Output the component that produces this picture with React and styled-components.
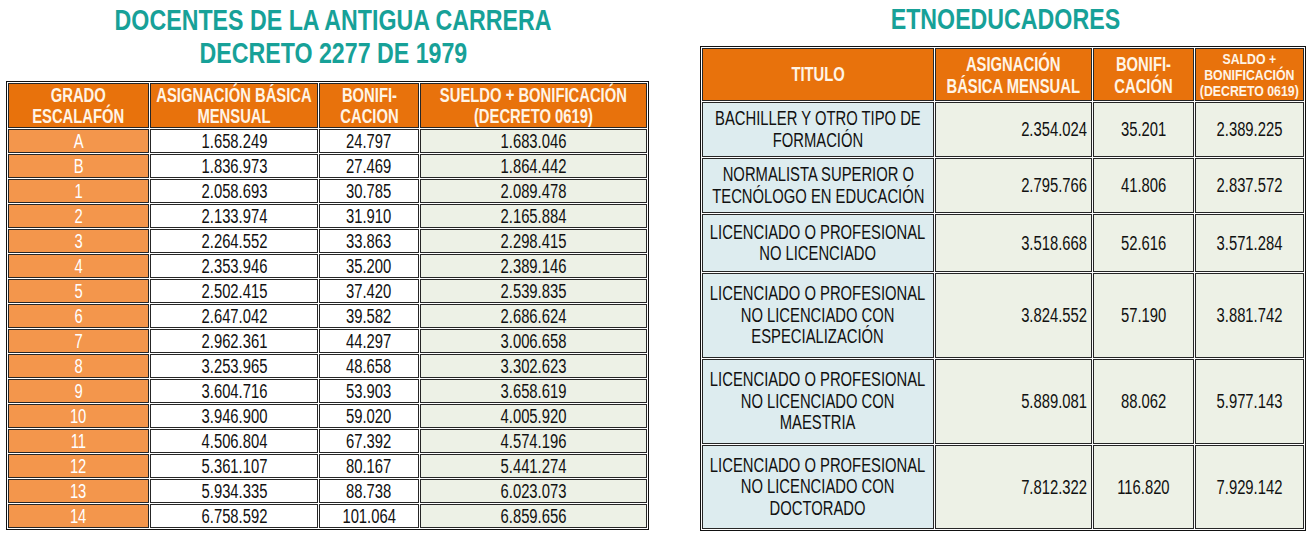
import React from "react";
import styled, { createGlobalStyle } from "styled-components";

const Global = createGlobalStyle`
  html, body { margin: 0; padding: 0; background: #ffffff; }
  body { font-family: "Liberation Sans", Arial, sans-serif; }
`;

const Page = styled.div`
  display: flex;
  align-items: flex-start;
  width: 1310px;
  height: 543px;
  overflow: hidden;
`;

const Section = styled.section`
  display: flex;
  flex-direction: column;
  align-items: center;
  margin-left: ${(p) => p.$ml}px;
  width: ${(p) => p.$w}px;
`;

const Title = styled.h1`
  margin: 0;
  width: 100%;
  display: flex;
  flex-direction: column;
  align-items: center;
  color: #17a198;
  font-family: "Liberation Sans", Arial, sans-serif;
  font-weight: 700;
  font-size: 29px;
  line-height: 33px;
  padding-top: ${(p) => p.$pt}px;
  padding-left: ${(p) => p.$shift || 0}px;
  height: ${(p) => p.$h}px;
  box-sizing: border-box;
`;

/* condensed text: Arial Narrow look, squeezed horizontally */
const Squeeze = styled.span`
  display: inline-block;
  white-space: nowrap;
  transform: scaleX(${(p) => p.$sx || 0.74});
  transform-origin: ${(p) => (p.$right ? "right" : "center")} center;
`;

const Grid = styled.div`
  display: grid;
  grid-template-columns: ${(p) => p.$cols};
  grid-template-rows: ${(p) => p.$rows};
  gap: 1px;
  padding: 1px;
  border: 1px solid #111;
  background: #fff;
`;

const Cell = styled.div`
  box-sizing: border-box;
  border: 1px solid #262626;
  background: ${(p) => p.$bg};
  color: ${(p) => p.$color || "#111"};
  display: flex;
  align-items: center;
  justify-content: ${(p) => (p.$right ? "flex-end" : "center")};
  text-align: center;
  padding: 0 ${(p) => (p.$right ? 4 : 0)}px;
  font-size: ${(p) => p.$fs || 20}px;
  line-height: ${(p) => p.$lh || 21}px;
  font-weight: ${(p) => (p.$bold ? 700 : 400)};
  min-width: 0;
`;

const HeadCell = styled(Cell).attrs({ $bg: "#e8720c", $color: "#fff4e6", $bold: true })``;

const ORANGE_LIGHT = "#f3964c";
const GREEN = "#edf1e6";
const BLUE = "#ddecef";

const left = [
  ["A", "1.658.249", "24.797", "1.683.046"],
  ["B", "1.836.973", "27.469", "1.864.442"],
  ["1", "2.058.693", "30.785", "2.089.478"],
  ["2", "2.133.974", "31.910", "2.165.884"],
  ["3", "2.264.552", "33.863", "2.298.415"],
  ["4", "2.353.946", "35.200", "2.389.146"],
  ["5", "2.502.415", "37.420", "2.539.835"],
  ["6", "2.647.042", "39.582", "2.686.624"],
  ["7", "2.962.361", "44.297", "3.006.658"],
  ["8", "3.253.965", "48.658", "3.302.623"],
  ["9", "3.604.716", "53.903", "3.658.619"],
  ["10", "3.946.900", "59.020", "4.005.920"],
  ["11", "4.506.804", "67.392", "4.574.196"],
  ["12", "5.361.107", "80.167", "5.441.274"],
  ["13", "5.934.335", "88.738", "6.023.073"],
  ["14", "6.758.592", "101.064", "6.859.656"],
];

const right = [
  [["BACHILLER Y OTRO TIPO DE", "FORMACIÓN"], "2.354.024", "35.201", "2.389.225"],
  [["NORMALISTA SUPERIOR O", "TECNÓLOGO EN EDUCACIÓN"], "2.795.766", "41.806", "2.837.572"],
  [["LICENCIADO O PROFESIONAL", "NO LICENCIADO"], "3.518.668", "52.616", "3.571.284"],
  [["LICENCIADO O PROFESIONAL", "NO LICENCIADO CON", "ESPECIALIZACIÓN"], "3.824.552", "57.190", "3.881.742"],
  [["LICENCIADO O PROFESIONAL", "NO LICENCIADO CON", "MAESTRIA"], "5.889.081", "88.062", "5.977.143"],
  [["LICENCIADO O PROFESIONAL", "NO LICENCIADO CON", "DOCTORADO"], "7.812.322", "116.820", "7.929.142"],
];

const Lines = ({ lines }) =>
  lines.map((l, i) => (
    <React.Fragment key={i}>
      {i > 0 && <br />}
      {l}
    </React.Fragment>
  ));

const T = ({ children, lines, right, sx }) => (
  <Squeeze $right={right} $sx={sx}>
    {lines ? <Lines lines={lines} /> : children}
  </Squeeze>
);

export default function App() {
  return (
    <>
      <Global />
      <Page>
        <Section $ml={6} $w={643}>
          <Title $pt={4} $h={81} $shift={12}>
            <Squeeze $sx={0.8}>DOCENTES DE LA ANTIGUA CARRERA</Squeeze>
            <Squeeze $sx={0.8}>DECRETO 2277 DE 1979</Squeeze>
          </Title>
          <Grid
            $cols="141px 168px 100px 227px"
            $rows={`45px repeat(${left.length}, 24px)`}
          >
            <HeadCell><T lines={["GRADO", "ESCALAFÓN"]} /></HeadCell>
            <HeadCell><T lines={["ASIGNACIÓN BÁSICA", "MENSUAL"]} /></HeadCell>
            <HeadCell><T lines={["BONIFI-", "CACION"]} /></HeadCell>
            <HeadCell><T lines={["SUELDO +  BONIFICACIÓN", "(DECRETO 0619)"]} /></HeadCell>
            {left.map((r) => (
              <React.Fragment key={r[0]}>
                <Cell $bg={ORANGE_LIGHT} $color="#ffffff"><T>{r[0]}</T></Cell>
                <Cell $bg="#ffffff"><T>{r[1]}</T></Cell>
                <Cell $bg="#ffffff"><T>{r[2]}</T></Cell>
                <Cell $bg={GREEN}><T>{r[3]}</T></Cell>
              </React.Fragment>
            ))}
          </Grid>
        </Section>
        <Section $ml={51} $w={606}>
          <Title $pt={3} $h={46} $shift={4}>
            <Squeeze $sx={0.8}>ETNOEDUCADORES</Squeeze>
          </Title>
          <Grid
            $cols="232px 157px 101px 109px"
            $rows="53px 55px 55px 58px 85px 85px 84px"
          >
            <HeadCell><T>TITULO</T></HeadCell>
            <HeadCell $lh={22}><T lines={["ASIGNACIÓN", "BÁSICA MENSUAL"]} /></HeadCell>
            <HeadCell $lh={22}><T lines={["BONIFI-", "CACIÓN"]} /></HeadCell>
            <HeadCell $fs={15} $lh={16}>
              <T sx={0.82} lines={["SALDO +", "BONIFICACIÓN", "(DECRETO 0619)"]} />
            </HeadCell>
            {right.map((r, i) => (
              <React.Fragment key={i}>
                <Cell $bg={BLUE} $lh={21.5}><T lines={r[0]} /></Cell>
                <Cell $bg={GREEN} $right><T right>{r[1]}</T></Cell>
                <Cell $bg={GREEN}><T>{r[2]}</T></Cell>
                <Cell $bg={GREEN}><T>{r[3]}</T></Cell>
              </React.Fragment>
            ))}
          </Grid>
        </Section>
      </Page>
    </>
  );
}
